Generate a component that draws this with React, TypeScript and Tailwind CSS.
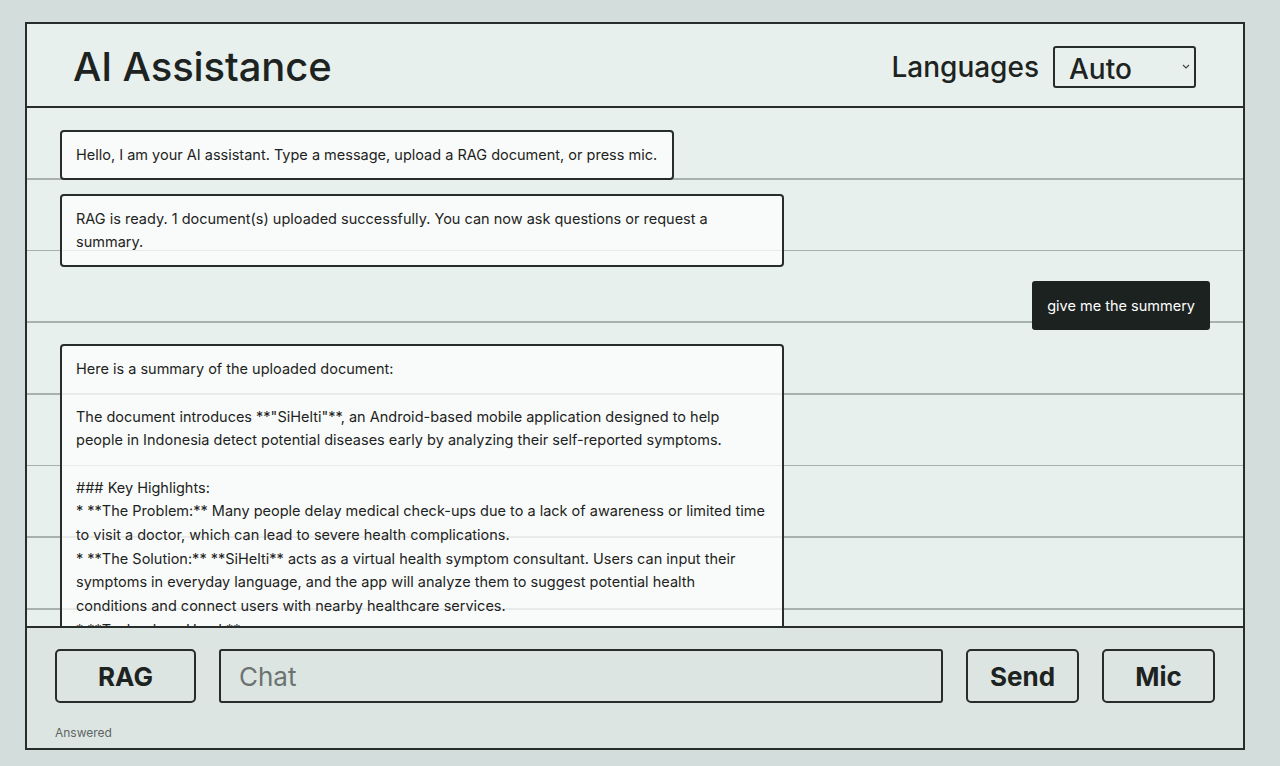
import { useState } from 'react';

type Msg = { role: 'bot' | 'user'; text: string };

const messages: Msg[] = [
  { role: 'bot', text: 'Hello, I am your AI assistant. Type a message, upload a RAG document, or press mic.' },
  { role: 'bot', text: 'RAG is ready. 1 document(s) uploaded successfully. You can now ask questions or request a summary.' },
  { role: 'user', text: 'give me the summery' },
  {
    role: 'bot',
    text:
      'Here is a summary of the uploaded document:\n\nThe document introduces **"SiHelti"**, an Android-based mobile application designed to help people in Indonesia detect potential diseases early by analyzing their self-reported symptoms.\n\n### Key Highlights:\n* **The Problem:** Many people delay medical check-ups due to a lack of awareness or limited time to visit a doctor, which can lead to severe health complications.\n* **The Solution:** **SiHelti** acts as a virtual health symptom consultant. Users can input their symptoms in everyday language, and the app will analyze them to suggest potential health conditions and connect users with nearby healthcare services.\n* **Technology Used:** ...',
  },
];

const App = () => {
  const [input, setInput] = useState('');

  return (
    <div className="min-h-[766px] bg-[#d3dddb] pl-[25px] pt-[22px] font-['Inter',sans-serif] text-[#1d2321]">
      <div className="flex h-[728px] w-[1220px] flex-col overflow-hidden border-2 border-[#262d2b] bg-[#e8f0ed]">
        {/* Header */}
        <div className="flex h-[84px] shrink-0 items-center justify-between border-b-2 border-[#262d2b] pl-[46px] pr-[47px] pt-[3px]">
          <h1 className="text-[40px] font-medium tracking-[-0.1px]">AI Assistance</h1>
          <div className="flex items-center gap-[14px]">
            <span className="text-[28px] font-medium">Languages</span>
            <div className="relative">
              <select className="h-[42px] w-[143px] appearance-none rounded-[3px] border-2 border-[#262d2b] bg-transparent pl-[14px] text-[28px] font-medium outline-none">
                <option>Auto</option>
                <option>English</option>
                <option>Indonesia</option>
              </select>
              <svg
                className="pointer-events-none absolute right-[6px] top-[18px]"
                width="8"
                height="5"
                viewBox="0 0 8 5"
                fill="none"
              >
                <path d="M1 1l3 3 3-3" stroke="#444" strokeWidth="1.2" />
              </svg>
            </div>
          </div>
        </div>

        {/* Chat */}
        <div className="flex flex-1 flex-col gap-[14px] overflow-hidden bg-[repeating-linear-gradient(to_bottom,transparent_0px,transparent_70px,#a8b1ae_70px,#a8b1ae_71.67px)] px-[33px] pt-[22px]">
          {messages.map((m, i) =>
            m.role === 'bot' ? (
              <div
                key={i}
                className="max-w-[724px] self-start whitespace-pre-wrap rounded-[4px] border-2 border-[#262d2b] bg-white/75 py-[11px] pl-[14px] pr-[15px] text-[14.5px] leading-[23.7px]"
              >
                {m.text}
              </div>
            ) : (
              <div
                key={i}
                className="self-end rounded-[3px] bg-[#1c2220] px-[15px] py-[13px] text-[14.5px] leading-[23px] text-white"
              >
                {m.text}
              </div>
            )
          )}
        </div>

        {/* Input bar */}
        <div className="h-[122px] shrink-0 border-t-2 border-[#262d2b] bg-[#dce5e2] px-[28px] pt-[21px]">
          <div className="flex h-[54px] gap-[23px]">
            <button className="w-[141px] rounded-[5px] border-2 border-[#262d2b] text-[26px] font-bold">RAG</button>
            <input
              value={input}
              onChange={(e) => setInput(e.target.value)}
              placeholder="Chat"
              className="min-w-0 flex-1 rounded-[3px] border-2 border-[#262d2b] bg-transparent px-[18px] text-[26px] outline-none placeholder:text-[#6b7371]"
            />
            <button className="w-[113px] rounded-[5px] border-2 border-[#262d2b] text-[26px] font-bold">Send</button>
            <button className="w-[113px] rounded-[5px] border-2 border-[#262d2b] text-[26px] font-bold">Mic</button>
          </div>
          <p className="mt-[21px] text-[12px] text-[#5e6664]">Answered</p>
        </div>
      </div>
    </div>
  );
};

export default App;
